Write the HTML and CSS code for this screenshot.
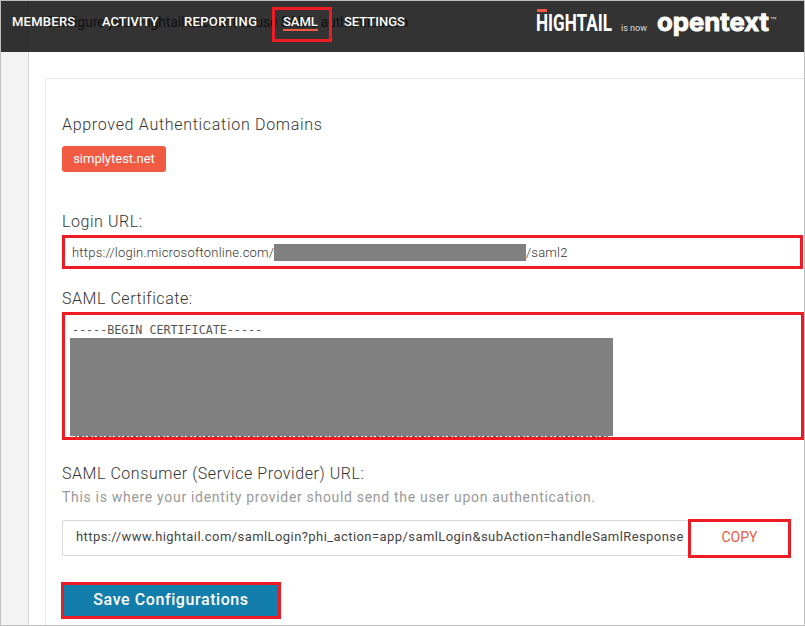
FILE: index.html
```html
<!DOCTYPE html>
<html lang="en">
<head>
<meta charset="utf-8">
<title>SAML settings</title>
<link rel="stylesheet" href="styles.css">
</head>
<body>
<div class="frame">
  <header class="topbar">
    <nav class="nav">
      <a class="members">MEMBERS</a>
      <a class="activity">ACTIVITY</a>
      <a class="reporting">REPORTING</a>
      <a class="saml current">SAML</a>
      <a class="settings">SETTINGS</a>
    </nav>
    <svg class="brand" width="245" height="36" viewBox="0 0 245 36">
      <rect x="2" y="4" width="10" height="3" fill="#f25b43"/>
      <text class="hightail" x="1" y="26" textLength="76" lengthAdjust="spacingAndGlyphs">HIGHTAIL</text>
      <text class="isnow" x="86" y="26" textLength="26" lengthAdjust="spacingAndGlyphs">is now</text>
      <text class="opentext" x="122" y="26" textLength="112" lengthAdjust="spacingAndGlyphs">opentext</text>
      <text class="tm" x="235" y="18" textLength="7" lengthAdjust="spacingAndGlyphs">™</text>
    </svg>
  </header>
  <aside class="side"></aside>
  <main class="main">
    <p class="intro">Configure your Hightail account to use SAML authentication</p>
    <section class="panel">
      <h2 class="label domains">Approved Authentication Domains</h2>
      <span class="tag"><span>simplytest.net</span></span>
      <h2 class="label login">Login URL:</h2>
      <div class="field url">
        <span class="url-start">https://login.microsoftonline.com/</span><span class="redacted"></span><span class="url-end">/saml2</span>
      </div>
      <h2 class="label certificate">SAML Certificate:</h2>
      <div class="field cert">
        <div class="begin">-----BEGIN CERTIFICATE-----</div>
        <div class="redacted-block"></div>
        <div class="cut-line"></div>
      </div>
      <h2 class="label consumer">SAML Consumer (Service Provider) URL:</h2>
      <p class="hint"><span>This is where your identity provider should send the user upon authentication.</span></p>
      <div class="copy-row">
        <div class="endpoint"><span>https://www.hightail.com/samlLogin?phi_action=app/samlLogin&amp;subAction=handleSamlResponse</span></div>
        <button class="copy">COPY</button>
      </div>
      <button class="save"><span>Save Configurations</span></button>
    </section>
  </main>
</div>
</body>
</html>
```
FILE: styles.css
```css
*, *::before, *::after { box-sizing: border-box; }
body { margin: 0; font-family: Roboto, "Open Sans", sans-serif; color: #555; }
h2, p { margin: 0; font-weight: 400; }
button { font-family: inherit; margin: 0; padding: 0; }
.frame {
  position: relative; display: flex; width: 805px; height: 626px;
  border: 1px solid #bfbfbf; overflow: hidden; background: #fff;
}
.topbar {
  position: absolute; top: 0; left: 0; right: 0; height: 51px;
  background: rgba(0, 0, 0, .8); display: flex; justify-content: space-between; z-index: 2;
}
.nav {
  display: flex; padding: 12px 0 0 11px; gap: 26px;
  font-size: 13px; line-height: 17px; font-weight: 500; color: #fff;
}
.nav a { white-space: nowrap; height: 17px; }
.members { width: 64px; letter-spacing: .25px; }
.activity { width: 56px; }
.reporting { width: 73px; letter-spacing: .35px; }
.saml { width: 35px; }
.settings { width: 62px; }
.current { position: relative; }
.current::before {
  content: ""; position: absolute; left: 0; right: 0; top: 16px; height: 2px; background: #f25b43;
}
.current::after {
  content: ""; position: absolute; left: -11px; top: -6px; width: 60px; height: 35px; border: 3px solid #ed1c24;
}
.brand { margin: 4px 24px 0 0; fill: #fff; }
.hightail { font: 700 23.5px Roboto, sans-serif; }
.isnow { font: 400 9.5px Roboto, sans-serif; fill: #ddd; }
.opentext { font: 700 25px Inter, sans-serif; stroke: #fff; stroke-width: .9px; }
.tm { font: 400 8px Roboto, sans-serif; fill: #ccc; }
.side { flex: 0 0 28px; background: #f3f3f3; border-right: 1px solid #d8d8d8; }
.main { flex: 1; min-width: 0; padding: 11px 0 0 16px; }
.intro { height: 66px; font-size: 14px; line-height: 20px; letter-spacing: -.15px; color: #555; white-space: nowrap; }
.panel { height: 560px; border: 1px solid #e8e8e8; border-width: 1px 0 0 1px; padding: 36px 0 0 16px; }
.label { font-size: 16px; line-height: 20px; height: 20px; font-weight: 300; color: #333; white-space: nowrap; letter-spacing: .55px; }
.domains { letter-spacing: .7px; }
.tag {
  display: flex; align-items: center; justify-content: center; width: 104px; height: 26px; margin: 11px 0 40px;
  border-radius: 3px; background: #f25b43; color: #fff; font-size: 13px; padding-bottom: 2px;
}
.field { border: 3px solid #ed1c24; background: #fff; }
.url {
  display: flex; align-items: center; width: 741px; height: 34px; margin: 3px 0 20px; padding-left: 7px;
  font-size: 13px; font-weight: 300; color: #333; white-space: nowrap;
}
.url-start { width: 202px; letter-spacing: .23px; }
.url-end { letter-spacing: .2px; }
.redacted { width: 252px; height: 17px; background: #808080; }
.cert { width: 742px; height: 128px; margin: 3px 0 24px; padding: 8px 0 0 5px; overflow: hidden; }
.begin { height: 15px; padding-left: 2px; font: 11.7px/14px "DejaVu Sans Mono", monospace; white-space: nowrap; color: #555; }
.redacted-block { width: 543px; height: 98px; background: #808080; }
.cut-line {
  width: 533px; height: 1px; margin-left: 5px;
  background: repeating-linear-gradient(90deg, #888 0 2px, #fff 2px 4px, #666 4px 7px, #ddd 7px 9px);
}
.hint { height: 20px; margin-top: 3px; font-size: 14px; line-height: 20px; color: #999; letter-spacing: .69px; white-space: nowrap; }
.copy-row { display: flex; align-items: center; height: 39px; margin: 12px 0 24px; }
.endpoint {
  width: 626px; height: 36px; margin-top: -1px; padding-left: 13px; border: 1px solid #d8d8d8; border-right: 0;
  border-radius: 2px 0 0 2px; font-size: 13px; line-height: 32px; letter-spacing: .425px; color: #444; white-space: nowrap;
}
.copy { width: 103px; height: 39px; padding-bottom: 3px; border: 3px solid #ed1c24; background: #fff; color: #f25b43; font-size: 14px; }
.save {
  width: 220px; height: 37px; margin-left: -1px; padding-bottom: 2px; border: 3px solid #ed1c24; background: #137dab;
  color: #fff; font-size: 16px; font-weight: 500; letter-spacing: .58px;
}
```
